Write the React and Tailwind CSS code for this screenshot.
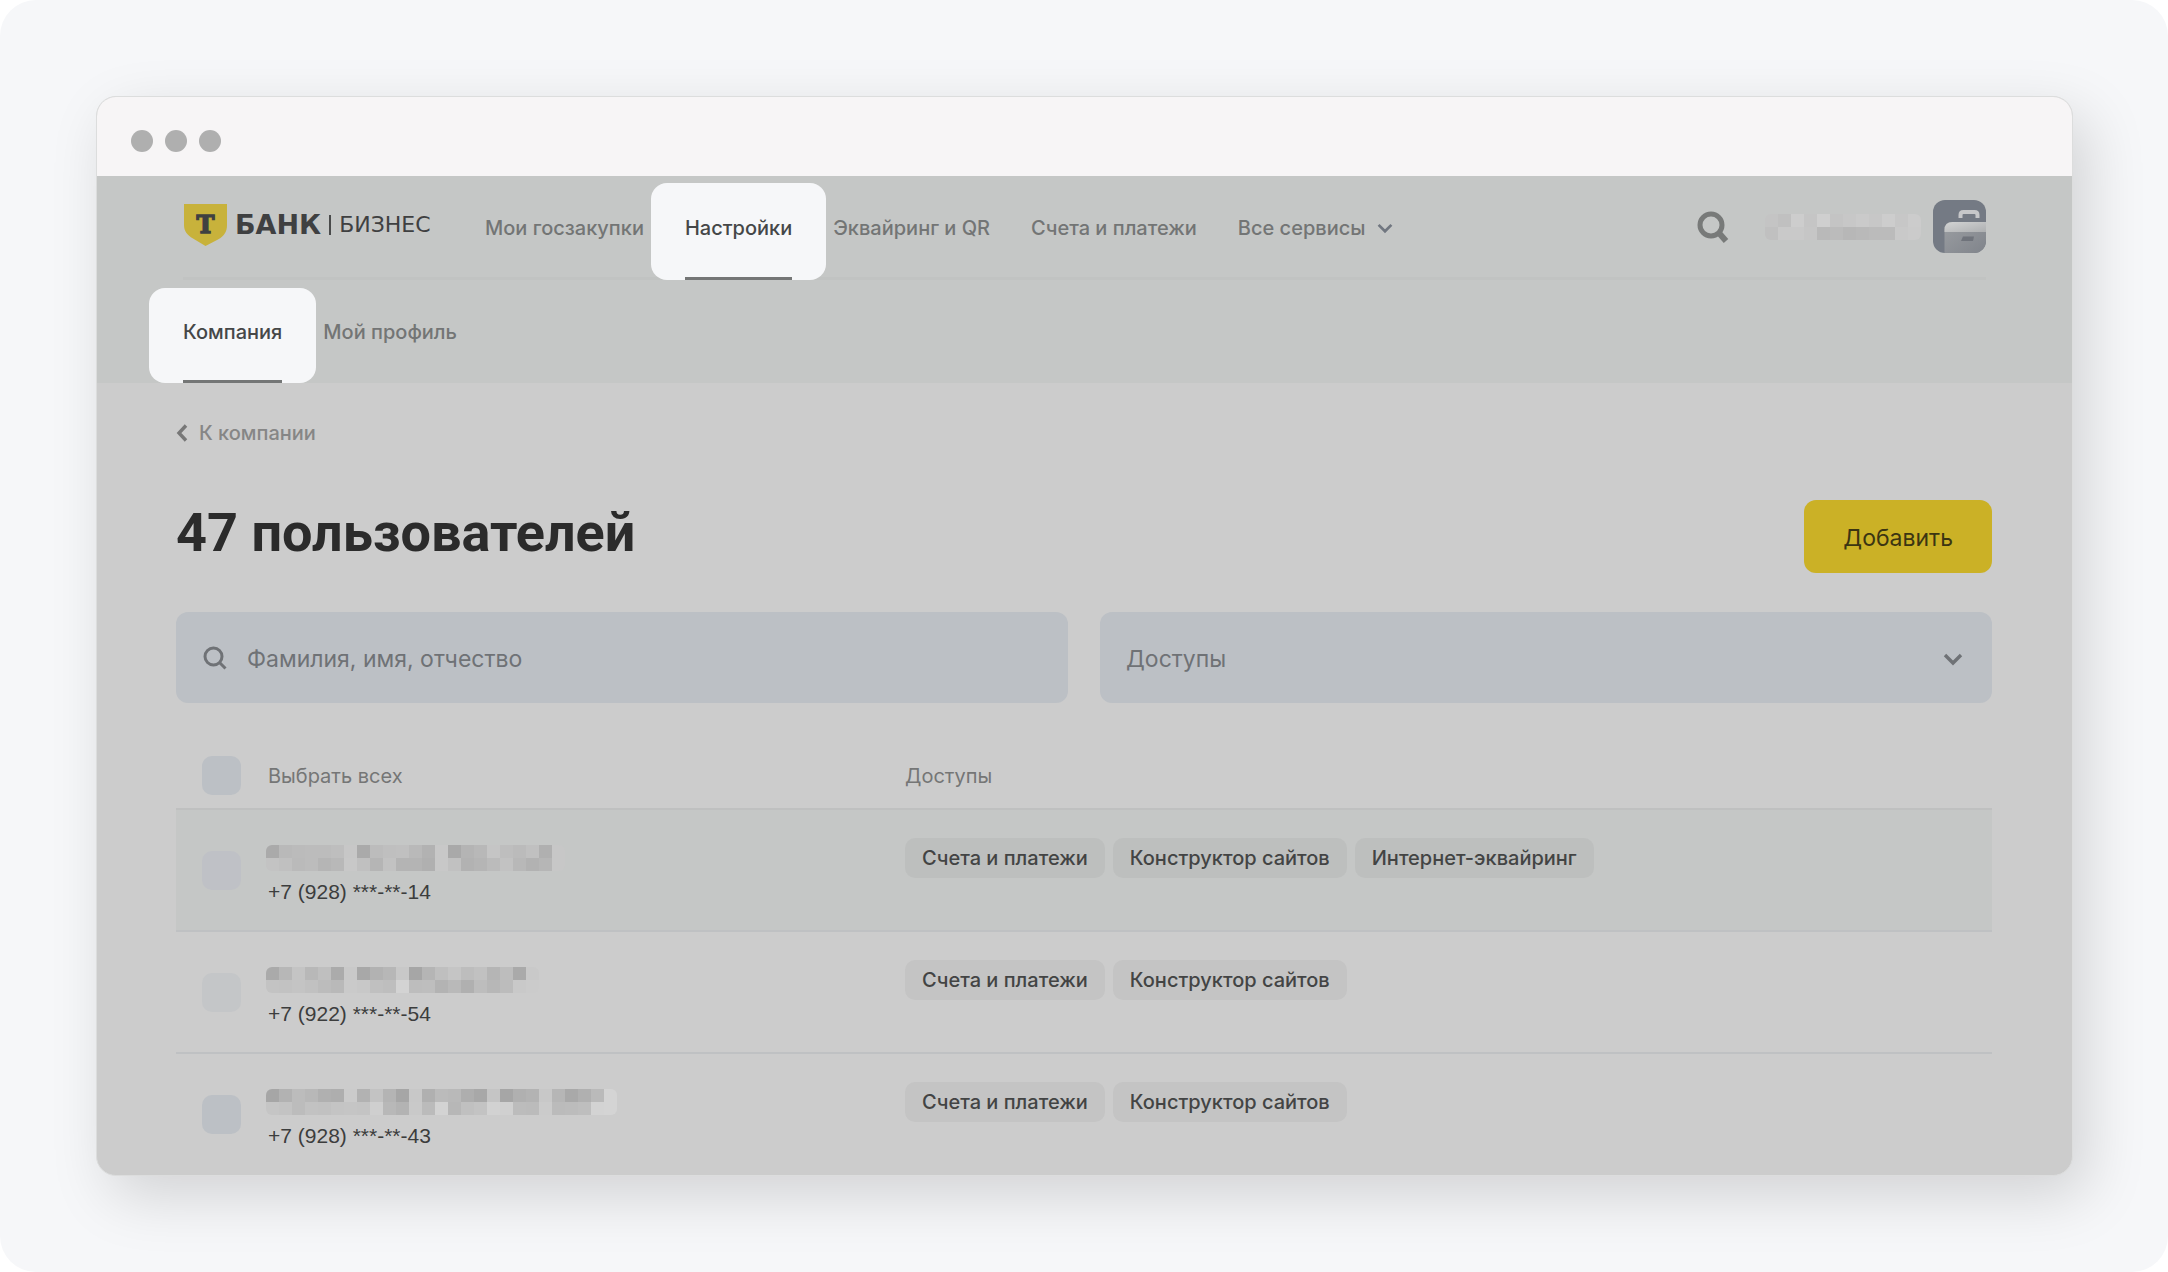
import clsx from 'clsx';

const navItems = ['Мои госзакупки', 'Настройки', 'Эквайринг и QR', 'Счета и платежи'];

// Each mask is two rows of grey cells that cover a name
const accountMask = [
    'c4 c0 cd c5 cf c4 c7 ca c7 cd c7 cc',
    'c0 c9 c9 c6 b9 bb b7 b9 bb bb c9 cb',
];

const users = [
    {
        phone: '+7 (928) ***-**-14',
        access: ['Счета и платежи', 'Конструктор сайтов', 'Интернет-эквайринг'],
        mask: [
            'aa b9 bb bc bc be c7 aa bc bf c0 b9 b2 c8 a9 b4 b8 c5 be bb c0 b0 c7',
            'c3 c0 ba bc b5 b8 c8 c0 b5 c2 b4 b4 b0 c8 c1 b2 b5 bb c2 b8 b2 b6 c7',
        ],
        row: 'bg-[#c5c7c6]',
        box: 'bg-[#bfc1c6]',
    },
    {
        phone: '+7 (922) ***-**-54',
        access: ['Счета и платежи', 'Конструктор сайтов'],
        mask: [
            'aa b7 c4 b8 bf ab c9 a8 b2 b7 c8 a6 b5 bf c5 bd c1 b5 bd aa c9',
            'c3 c2 c4 c1 bc b9 ca c8 c0 be d3 bd be b3 b9 b0 bd b7 bc c9 cb',
        ],
        row: '',
        box: 'bg-[#c4c6c8]',
    },
    {
        phone: '+7 (928) ***-**-43',
        access: ['Счета и платежи', 'Конструктор сайтов'],
        mask: [
            'a6 b2 bc b8 b0 ae cb b2 c3 b4 a6 c8 b0 bb b9 ae a8 c5 a6 b0 b3 c8 b6 a9 b0 ba d4',
            'c5 c3 bc c2 c1 c4 c5 c4 cf b8 b3 c9 bb d3 b7 c0 c3 d2 d0 bc bb cb bb bc be d3 d4',
        ],
        row: '',
        box: 'bg-[#bcc0c5]',
    },
];

function Mask({ rows }) {
    return (
        <div aria-hidden="true" className="w-fit rounded-md overflow-hidden">
            {rows.map((row) => (
                <div key={row} className="flex">
                    {row.split(' ').map((c, i) => (
                        <span key={i} className="size-[13px]" style={{ backgroundColor: `#${c}${c}${c}` }} />
                    ))}
                </div>
            ))}
        </div>
    );
}

function Chevron({ className }) {
    return (
        <svg viewBox="0 0 20 13" className={className} fill="none" stroke="currentColor" strokeWidth="3.4">
            <path d="M2 2l8 8 8-8" />
        </svg>
    );
}

function Logo() {
    return (
        <a href="#" className="flex items-center w-[302px] shrink-0 pl-px pb-1 text-[#3f4041]">
            <svg viewBox="0 0 43 42" className="w-[43px] h-[42px]">
                <path d="M0 0h43v21c0 7-3 11-9 14.500L21.500 42 9 34.500C3 31 0 27 0 21z" fill="#c8b23b" />
                <text
                    x="21.500"
                    y="29"
                    textAnchor="middle"
                    fontFamily="DejaVu Serif, serif"
                    fontWeight="700"
                    fontSize="24"
                    fill="#3f4041"
                    stroke="#3f4041"
                    strokeWidth="1.500"
                >
                    Т
                </text>
            </svg>
            <span className="ml-2 font-['DejaVu_Sans',sans-serif] font-bold text-[27px] leading-8">БАНК</span>
            <span className="ml-2 w-[2px] h-5 bg-[#4a4b4b]" />
            <span className="ml-2 font-['DejaVu_Sans',sans-serif] text-[22px] leading-8">БИЗНЕС</span>
        </a>
    );
}

function Avatar() {
    return (
        <svg viewBox="0 0 53 53" className="size-[53px] rounded-xl">
            <defs>
                <linearGradient id="lid" x1="0" y1="0" x2="1" y2="1">
                    <stop offset="0" stopColor="#d3d4d4" />
                    <stop offset="1" stopColor="#adafb1" />
                </linearGradient>
                <linearGradient id="case" x1="0" y1="0" x2="1" y2="1">
                    <stop offset="0" stopColor="#9b9ea2" />
                    <stop offset="1" stopColor="#80848b" />
                </linearGradient>
            </defs>
            <rect width="53" height="53" fill="#747a84" />
            <path d="M27.500 18v-3q0-3 3-3h11q3 0 3 3v3" fill="none" stroke="#c6c7c9" strokeWidth="4" />
            <path d="M11.500 53V30q0-8 8-8H53v31z" fill="url(#case)" />
            <path d="M11.500 32v-2q0-8 8-8H53v10z" fill="url(#lid)" />
            <path d="M30 36.500h11l-1 4.500H28z" fill="#6f737b" />
        </svg>
    );
}

function Tab({ label, active }) {
    return (
        <a
            href="#"
            className={clsx(
                'flex flex-col whitespace-nowrap text-[20px] leading-7',
                active ? 'bg-[#f6f7f9] text-[#454748] rounded-2xl px-[34px] -mx-[34px]' : 'text-[#737575]'
            )}
        >
            <span className="flex-1 flex items-center pb-1">{label}</span>
            <span className={clsx('h-[3px]', active && 'bg-[#747676]')} />
        </a>
    );
}

function Header() {
    return (
        <header className="bg-[#c5c7c6] px-[86px] font-medium">
            <div className="flex h-[104px] border-b-[3px] border-[#c1c3c2]">
                <Logo />
                <nav className="flex gap-[41px] pt-[7px] -mb-[3px]">
                    {navItems.map((item) => (
                        <Tab key={item} label={item} active={item === 'Настройки'} />
                    ))}
                    <button type="button" className="flex items-center gap-3 pb-[7px] text-[20px] leading-7 text-[#737575] whitespace-nowrap">
                        Все сервисы
                        <Chevron className="w-4 h-[11px] text-[#717780]" />
                    </button>
                </nav>
                <div className="ml-auto flex items-center">
                    <button type="button" aria-label="Поиск" className="mr-9 text-[#787a79]">
                        <svg viewBox="0 0 32 34" className="w-8 h-[34px]" fill="none" stroke="currentColor" strokeWidth="5">
                            <circle cx="14" cy="15" r="11" />
                            <path d="M22 23l7 8" strokeWidth="6" />
                        </svg>
                    </button>
                    <Mask rows={accountMask} />
                    <button type="button" aria-label="Профиль" className="ml-3">
                        <Avatar />
                    </button>
                </div>
            </div>
            <nav className="flex gap-[41px] h-[103px] pt-2">
                <Tab label="Компания" active />
                <Tab label="Мой профиль" />
            </nav>
        </header>
    );
}

function UserTable() {
    return (
        <table className="w-full mt-10 table-fixed border-separate border-spacing-0 text-left text-[20px] leading-7">
            <thead>
                <tr className="h-[67px] text-[#757676]">
                    <th className="w-[92px] p-0 pl-[26px] border-b-2 border-[#bfc0c0]">
                        <input id="all" type="checkbox" className="block appearance-none size-[39px] rounded-[10px] bg-[#bcc0c5]" />
                    </th>
                    <th className="w-[637px] p-0 border-b-2 border-[#bfc0c0] font-normal">
                        <label htmlFor="all">Выбрать всех</label>
                    </th>
                    <th className="p-0 border-b-2 border-[#bfc0c0] font-normal">Доступы</th>
                </tr>
            </thead>
            <tbody className="[&>tr:not(:last-child)>td]:border-b-2">
                {users.map((user) => (
                    <tr key={user.phone} className={user.row}>
                        <td className="p-0 pl-[26px] border-[#bfc1c3]">
                            <input type="checkbox" aria-label={user.phone} className={clsx('block appearance-none size-[39px] rounded-[10px]', user.box)} />
                        </td>
                        <td className="p-0 pt-[35px] pb-6 border-[#bfc1c3] text-[#3c3d3d]">
                            <div className="-ml-[2px]">
                                <Mask rows={user.mask} />
                            </div>
                            <div className="mt-[7px] font-['Liberation_Sans',sans-serif] text-[21px] leading-7">{user.phone}</div>
                        </td>
                        <td className="p-0 pt-7 align-top border-[#bfc1c3]">
                            <ul className="flex gap-2">
                                {user.access.map((name) => (
                                    <li key={name} className="h-10 px-[17px] flex items-center rounded-[10px] bg-black/4 font-medium text-[#434444] whitespace-nowrap">
                                        {name}
                                    </li>
                                ))}
                            </ul>
                        </td>
                    </tr>
                ))}
            </tbody>
        </table>
    );
}

export default function App() {
    return (
        <div className="bg-white">
            <div className="rounded-[36px] bg-[#f6f7f9] p-24 pr-[95px] font-[Inter,sans-serif]">
                <div className="rounded-[20px] border border-[#dcdddd] bg-[#ccc] overflow-hidden shadow-[14px_20px_60px_rgba(0,0,0,0.15)]">
                    <div className="flex items-center gap-3 h-[79px] pt-[9px] pl-[34px] bg-[#f7f5f6]">
                        <span className="size-[22px] rounded-full bg-[#afafaf]" />
                        <span className="size-[22px] rounded-full bg-[#afafaf]" />
                        <span className="size-[22px] rounded-full bg-[#afafaf]" />
                    </div>
                    <Header />
                    <main className="pt-9 pl-[79px] pr-20 pb-px">
                        <a href="#" className="flex items-center gap-[11px] w-fit text-[20px] leading-7 font-medium text-[#868686]">
                            <svg viewBox="0 0 11 18" className="w-3 h-[18px]" fill="none" stroke="#777" strokeWidth="3.400">
                                <path d="M9.500 1.500L2.500 9l7 7.500" />
                            </svg>
                            К компании
                        </a>
                        <div className="flex items-center justify-between mt-[53px]">
                            <h1 className="pb-2 font-[Roboto,sans-serif] text-[54px] leading-[64px] font-bold text-[#2b2b2b]">47 пользователей</h1>
                            <button type="button" className="h-[73px] px-[39px] pt-1 rounded-xl bg-[#cbb126] text-[23px] text-[#3b3512]">Добавить</button>
                        </div>
                        <div className="grid grid-cols-2 gap-8 mt-[39px]">
                            <label className="flex items-center h-[91px] pl-[27px] rounded-xl bg-[#bcc0c5] text-[#6f7276]">
                                <svg viewBox="0 0 24 24" className="size-6 shrink-0" fill="none" stroke="currentColor" strokeWidth="3">
                                    <circle cx="10.500" cy="10.500" r="8.500" />
                                    <path d="M16.500 16.500l6 6" />
                                </svg>
                                <input
                                    type="text"
                                    placeholder="Фамилия, имя, отчество"
                                    aria-label="Фамилия, имя, отчество"
                                    className="flex-1 ml-5 pt-1 bg-transparent outline-none text-[23px] placeholder:text-[#6f7276]"
                                />
                            </label>
                            <div className="relative text-[#6f7276]">
                                <select aria-label="Доступы" className="w-full h-[91px] pl-[26px] pt-1 rounded-xl bg-[#bcc0c5] appearance-none text-[23px]">
                                    <option>Доступы</option>
                                </select>
                                <Chevron className="absolute right-[29px] top-[41px] w-5 h-[13px] pointer-events-none" />
                            </div>
                        </div>
                        <UserTable />
                    </main>
                </div>
            </div>
        </div>
    );
}
